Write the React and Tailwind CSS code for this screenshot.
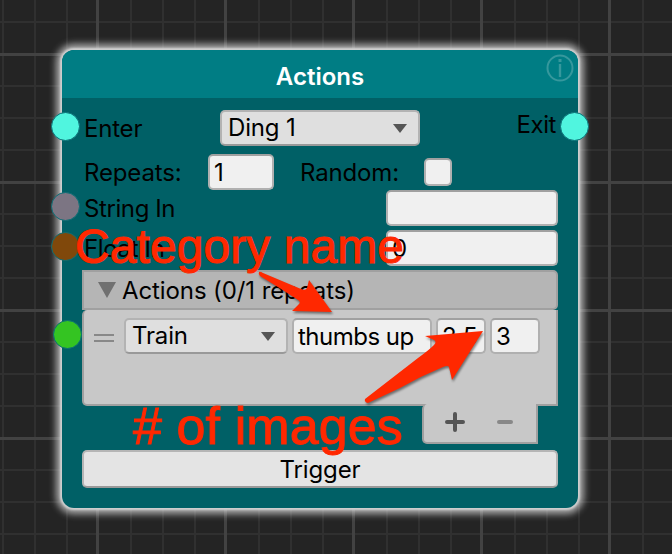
const range = (start, step, end) => {
  const out = [];
  for (let v = start; v < end; v += step) out.push(v);
  return out;
};

function Grid() {
  return (
    <svg className="absolute inset-0" width="672" height="554" shapeRendering="crispEdges">
      <g fill="#303030">
        {range(2, 32, 672).filter((x) => x % 128 !== 98).map((x) => <rect key={x} x={x} y="0" width="2" height="554" />)}
        {range(21, 32, 554).map((y) => <rect key={y} x="0" y={y} width="672" height="2" />)}
      </g>
      <g fill="#424242">
        {range(96, 128, 672).map((x) => <rect key={x} x={x} y="0" width="3" height="554" />)}
        {range(53, 128, 554).map((y) => <rect key={y} x="0" y={y} width="672" height="3" />)}
      </g>
    </svg>
  );
}

function Port({ className }) {
  return <span className={`absolute h-[29px] w-[29px] rounded-full border border-[#0b6e75] ${className}`} />;
}

function Field({ className = "", children }) {
  return (
    <div className={`flex items-center rounded-[5px] border-2 border-[#b0b0b0] border-t-[#a0a0a0] bg-[#f0f0f0] pl-1 pt-px ${className}`}>
      {children}
    </div>
  );
}

function Select({ className = "", children }) {
  return (
    <div className={`flex items-center justify-between rounded-[5px] border-2 border-[#b3b3b3] border-b-[#999] bg-[#dfdfdf] pl-1.5 ${className}`}>
      <span>{children}</span>
      <svg width="14" height="9" viewBox="0 0 14 9"><path d="M0 0h14L7 9z" fill="#555" /></svg>
    </div>
  );
}

function Annotations() {
  return (
    <div className="pointer-events-none absolute inset-0 font-['Liberation_Sans',Arial,sans-serif] text-[#ff2800] [-webkit-text-stroke:1px_#ff2800]">
      <span className="absolute left-[75px] top-[219px] whitespace-nowrap text-[48px] leading-[55px] tracking-[0.07px]">Category name</span>
      <span className="absolute left-[133px] top-[396px] whitespace-nowrap text-[52px] leading-[60px] tracking-[0.1px]"># of images</span>
      <svg className="absolute inset-0 drop-shadow-[1px_2px_1px_rgba(0,0,0,0.45)]" width="672" height="554" fill="#ff2800">
        <path d="M259 272Q260 271 263 273L301 289Q306 291 307 288L309 280L332 312L292 311L299 304Q301 302 298 300Q280 288 260 276Q258 274 259 272Z" />
        <path d="M365 399L418 358Q429 350 434 345Q437 342 434 340L425 336L483 331L452 380L449 367Q448 365 443 367Q421 376 400 388L368 403Q364 402 365 399Z" />
      </svg>
    </div>
  );
}

export default function App() {
  return (
    <main className="relative h-[554px] w-[672px] overflow-hidden bg-[#242424] font-[Inter,sans-serif] text-[24px] leading-[28px] tracking-[-0.15px] text-black">
      <Grid />
      <section className="absolute left-[62px] top-[50px] flex h-[458px] w-[516px] flex-col rounded-[12px] bg-[#006066] shadow-[0_0_2px_2px_#d0d0d0,0_0_7px_6px_rgba(215,215,215,0.75)]">
        <header className="flex h-12 shrink-0 items-center justify-center rounded-t-[12px] bg-[#007d84] pt-1.5 font-semibold tracking-normal text-white">
          <h1>Actions</h1>
          <svg className="absolute left-[484px] top-1" width="28" height="28" fill="none" stroke="#36989d" strokeWidth="2">
            <circle cx="14" cy="14" r="12.5" />
            <path d="M14 10v13" strokeWidth="2.4" /><path d="M14 5v3" strokeWidth="3" />
          </svg>
        </header>
        <div className="flex flex-col px-5 pt-3">
          <div className="flex h-9 items-center">
            <span className="w-[138px] pl-0.5 pt-0.5 tracking-[-0.2px]">Enter</span>
            <Select className="h-9 w-[200px] pr-[11px]">Ding 1</Select>
            <span className="ml-auto pb-[6px] pr-0.5 tracking-[-0.4px]">Exit</span>
          </div>
          <div className="mt-2 flex h-9 items-center">
            <span className="w-[126px] pl-0.5 pt-0.5">Repeats:</span>
            <Field className="h-9 w-[66px]">1</Field>
            <span className="ml-[26px] w-[124px] pt-0.5">Random:</span>
            <Field className="h-7 w-7" />
          </div>
          <div className="flex h-9 items-center justify-between">
            <span className="pl-0.5 pt-0.5 tracking-[-0.4px]">String In</span>
            <Field className="h-9 w-[172px]" />
          </div>
          <div className="mt-1 flex h-9 items-center justify-between">
            <span className="pl-0.5 pt-0.5 tracking-[-0.35px]">Float In</span>
            <Field className="h-9 w-[172px]">0</Field>
          </div>
          <div className="mt-1 flex h-10 items-center rounded-br-[5px] rounded-tr-[5px] border-2 border-[#a0a0a0] bg-[#b5b5b5] pl-[14px]">
            <svg width="18" height="16"><path d="M0 0h18L9 16z" fill="#707070" /></svg>
            <span className="ml-[6px] pt-0.5 tracking-[-0.1px]">Actions (0/1 repeats)</span>
          </div>
          <div className="flex h-24 items-start rounded-bl-[5px] rounded-tl-[5px] border-b-2 border-l-2 border-r-2 border-[#a0a0a0] bg-[#c8c8c8] pl-[10px] pt-2">
            <div className="mt-4 h-2 w-5 border-y-2 border-[#888]" />
            <Select className="ml-[10px] h-9 w-[164px] pr-[11px]">Train</Select>
            <Field className="ml-1 h-9 w-[140px] whitespace-nowrap tracking-[-0.5px]">thumbs up</Field>
            <Field className="ml-1 h-9 w-[50px]">2.5</Field>
            <Field className="ml-1 h-9 w-[50px]">3</Field>
          </div>
          <div className="-mt-0.5 mr-5 flex h-10 w-[116px] items-center self-end rounded-bl-[5px] rounded-tl-[5px] border-b-2 border-l-2 border-r-2 border-[#a0a0a0] bg-[#c8c8c8] pb-0.5 pl-[21px]">
            <svg width="72" height="20" strokeWidth="4" strokeLinecap="round">
              <path d="M2 10h16M10 2v16" stroke="#555" /><path d="M54 10h12" stroke="#888" />
            </svg>
          </div>
          <button className="mt-1.5 flex h-[38px] items-center justify-center rounded-[5px] border-2 border-[#b5b5b5] border-b-[#999] bg-[#e4e4e4] pt-0.5">Trigger</button>
        </div>
        <Port className="left-[-11px] top-[62px] bg-[#50f5df]" />
        <Port className="left-[-11px] top-[142px] bg-[#7c7583]" />
        <Port className="left-[-11px] top-[182px] bg-[#80480b]" />
        <Port className="left-[-9px] top-[270px] bg-[#34c422]" />
        <Port className="left-[498px] top-[62px] bg-[#50f5df]" />
      </section>
      <Annotations />
    </main>
  );
}
